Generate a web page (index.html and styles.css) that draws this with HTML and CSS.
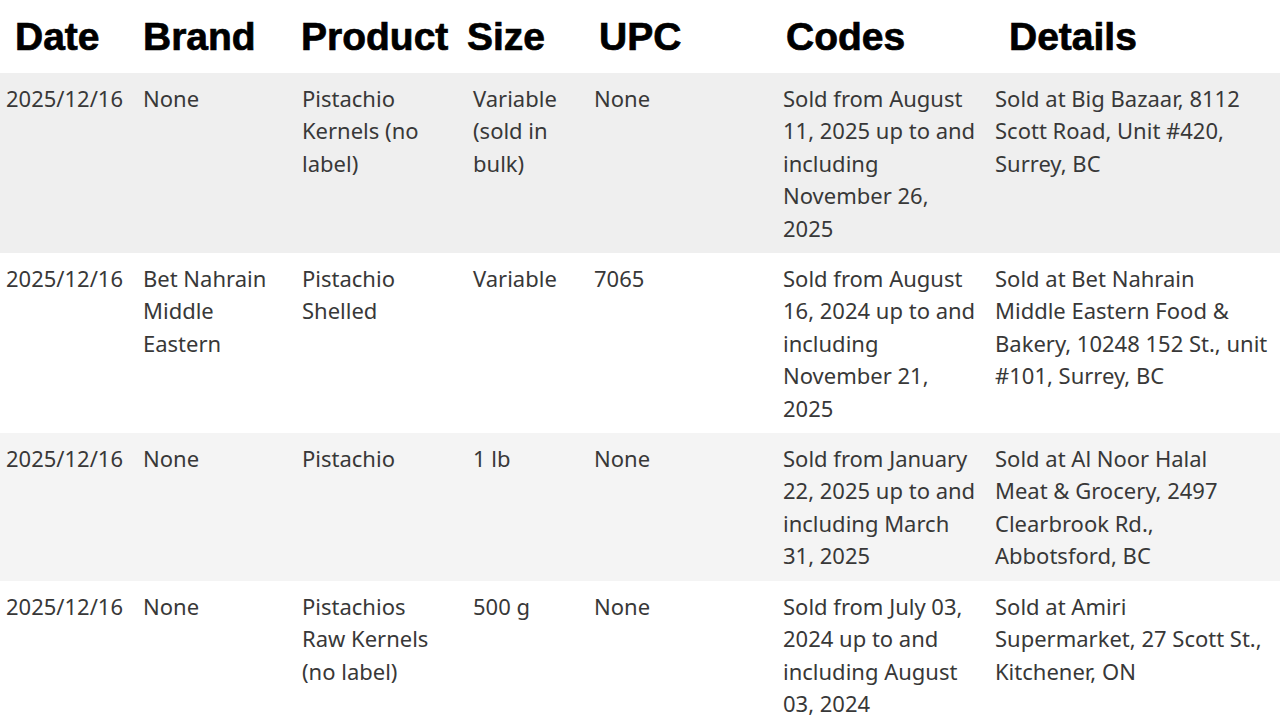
FILE: index.html
```html
<!DOCTYPE html>
<html lang="en">
<head>
<meta charset="utf-8">
<title>Recalls</title>
<link rel="stylesheet" href="styles.css">
</head>
<body>
<table class="recalls">
  <colgroup>
    <col class="c-date"><col class="c-brand"><col class="c-product"><col class="c-size"><col class="c-upc"><col class="c-codes"><col class="c-details">
  </colgroup>
  <thead>
    <tr>
      <th class="h-date">Date</th>
      <th class="h-brand">Brand</th>
      <th class="h-product">Product</th>
      <th class="h-size">Size</th>
      <th class="h-upc">UPC</th>
      <th class="h-codes">Codes</th>
      <th class="h-details">Details</th>
    </tr>
  </thead>
  <tbody>
    <tr class="odd">
      <td>2025/12/16</td>
      <td>None</td>
      <td>Pistachio Kernels (no label)</td>
      <td>Variable (sold in bulk)</td>
      <td>None</td>
      <td>Sold from August 11, 2025 up to and including November 26, 2025</td>
      <td>Sold at Big Bazaar, 8112 Scott Road, Unit #420, Surrey, BC</td>
    </tr>
    <tr>
      <td>2025/12/16</td>
      <td>Bet Nahrain Middle Eastern</td>
      <td>Pistachio Shelled</td>
      <td>Variable</td>
      <td>7065</td>
      <td>Sold from August 16, 2024 up to and including November 21, 2025</td>
      <td>Sold at Bet Nahrain Middle Eastern Food &amp; Bakery, 10248 152 St., unit #101, Surrey, BC</td>
    </tr>
    <tr class="odd alt">
      <td>2025/12/16</td>
      <td>None</td>
      <td>Pistachio</td>
      <td>1 lb</td>
      <td>None</td>
      <td>Sold from January 22, 2025 up to and including March 31, 2025</td>
      <td>Sold at Al Noor Halal Meat&nbsp;&amp; Grocery, 2497 Clearbrook Rd., Abbotsford, BC</td>
    </tr>
    <tr>
      <td>2025/12/16</td>
      <td>None</td>
      <td>Pistachios Raw Kernels (no label)</td>
      <td>500 g</td>
      <td>None</td>
      <td>Sold from July 03, 2024 up to and including August 03, 2024</td>
      <td>Sold at Amiri Supermarket, 27 Scott St., Kitchener, ON</td>
    </tr>
  </tbody>
</table>
</body>
</html>
```

FILE: styles.css
```css
html, body {
  margin: 0;
  padding: 0;
  background: #ffffff;
}

.recalls {
  width: 1280px;
  border-collapse: collapse;
  table-layout: fixed;
  font-family: "Noto Sans", "Open Sans", sans-serif;
  font-size: 22px;
  line-height: 32.4px;
  color: #383838;
}

.c-date { width: 137px; }
.c-brand { width: 159px; }
.c-product { width: 171px; }
.c-size { width: 121px; }
.c-upc { width: 189px; }
.c-codes { width: 212px; }
.c-details { width: 291px; }

.recalls th {
  font-family: "Liberation Sans", Arial, sans-serif;
  font-weight: 700;
  font-size: 39px;
  line-height: 40px;
  color: #000;
  text-align: left;
  padding: 17px 0 16px;
  -webkit-text-stroke: 0.7px #000;
  white-space: nowrap;
}

.h-date { padding-left: 15px !important; }
.h-brand { padding-left: 6px !important; }
.h-product { padding-left: 5px !important; }
.h-size { padding-left: 0 !important; }
.h-upc { padding-left: 11px !important; }
.h-codes { padding-left: 9px !important; }
.h-details { padding-left: 20px !important; }

.recalls td {
  vertical-align: top;
  padding: 9px 6px 9px;
}

.recalls td:nth-child(3) { padding-right: 20px; }
.recalls td:nth-child(7) { padding-right: 12px; }

.recalls tr.odd { background: #efefef; }
.recalls tr.alt { background: #f4f4f4; }
```
